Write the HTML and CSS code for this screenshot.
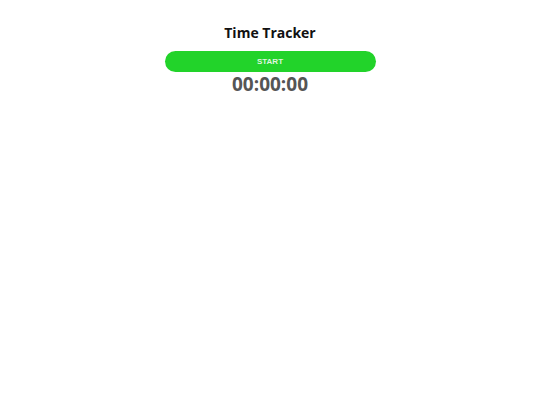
FILE: index.html
```html
<!DOCTYPE html>
<html lang="en">
<head>
    <meta charset="UTF-8">
    <meta name="viewport" content="width=device-width, initial-scale=1.0">
    <title>Time Tracker</title>
    <link rel="stylesheet" href="styles.css">
</head>
<body>
    <div class="tracker">
        <h1 class="title">Time Tracker</h1>
        <button class="start-btn" id="startBtn">START</button>
        <div class="timer" id="timer">00:00:00</div>
    </div>
</body>
</html>
```

FILE: styles.css
```css
body {
    margin: 0;
    font-family: "Open Sans", sans-serif;
    background: #fff;
}

.tracker {
    display: flex;
    flex-direction: column;
    align-items: center;
    padding-top: 22px;
}

.title {
    margin: 0 0 7px;
    font-size: 14px;
    font-weight: 700;
    color: #111;
    line-height: 22px;
}

.start-btn {
    width: 211px;
    height: 21px;
    padding: 0;
    border: none;
    border-radius: 11px;
    background: #22d32a;
    color: #dff5df;
    font-family: "Liberation Sans", Arial, sans-serif;
    font-size: 8px;
    font-weight: bold;
    cursor: pointer;
}

.timer {
    font-size: 19px;
    font-weight: 700;
    color: #555;
    line-height: 24px;
}
```
